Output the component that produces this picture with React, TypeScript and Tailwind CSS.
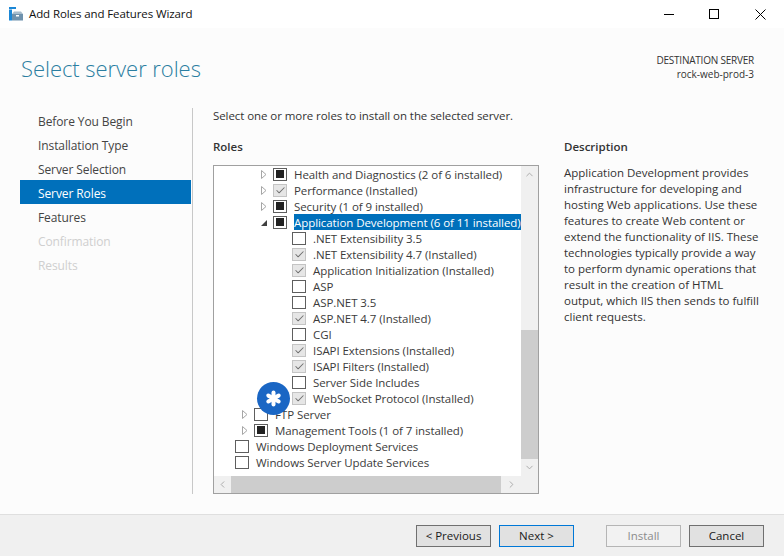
import { Check, ChevronDown, ChevronLeft, ChevronRight, ChevronUp } from "lucide-react";

type Mark = "none" | "check" | "partial";

interface RoleRow {
  label: string;
  depth: number;
  mark: Mark;
  expander?: "closed" | "open";
  selected?: boolean;
}

const steps = [
  { label: "Before You Begin", state: "normal" },
  { label: "Installation Type", state: "normal" },
  { label: "Server Selection", state: "normal" },
  { label: "Server Roles", state: "active" },
  { label: "Features", state: "normal" },
  { label: "Confirmation", state: "disabled" },
  { label: "Results", state: "disabled" },
];

const roles: RoleRow[] = [
  { label: "Health and Diagnostics (2 of 6 installed)", depth: 2, mark: "partial", expander: "closed" },
  { label: "Performance (Installed)", depth: 2, mark: "check", expander: "closed" },
  { label: "Security (1 of 9 installed)", depth: 2, mark: "partial", expander: "closed" },
  { label: "Application Development (6 of 11 installed)", depth: 2, mark: "partial", expander: "open", selected: true },
  { label: ".NET Extensibility 3.5", depth: 3, mark: "none" },
  { label: ".NET Extensibility 4.7 (Installed)", depth: 3, mark: "check" },
  { label: "Application Initialization (Installed)", depth: 3, mark: "check" },
  { label: "ASP", depth: 3, mark: "none" },
  { label: "ASP.NET 3.5", depth: 3, mark: "none" },
  { label: "ASP.NET 4.7 (Installed)", depth: 3, mark: "check" },
  { label: "CGI", depth: 3, mark: "none" },
  { label: "ISAPI Extensions (Installed)", depth: 3, mark: "check" },
  { label: "ISAPI Filters (Installed)", depth: 3, mark: "check" },
  { label: "Server Side Includes", depth: 3, mark: "none" },
  { label: "WebSocket Protocol (Installed)", depth: 3, mark: "check" },
  { label: "FTP Server", depth: 1, mark: "none", expander: "closed" },
  { label: "Management Tools (1 of 7 installed)", depth: 1, mark: "partial", expander: "closed" },
  { label: "Windows Deployment Services", depth: 0, mark: "none" },
  { label: "Windows Server Update Services", depth: 0, mark: "none" },
];

const descriptionLines = [
  "Application Development provides",
  "infrastructure for developing and",
  "hosting Web applications. Use these",
  "features to create Web content or",
  "extend the functionality of IIS. These",
  "technologies typically provide a way",
  "to perform dynamic operations that",
  "result in the creation of HTML",
  "output, which IIS then sends to fulfill",
  "client requests.",
];

function TreeCheckbox({ mark }: { mark: Mark }) {
  if (mark === "check") {
    return (
      <span className="flex h-[13px] w-[14px] shrink-0 items-center justify-center border border-[#c4c4c4] bg-[#e6e6e6]">
        <Check size={11} strokeWidth={2.2} className="text-[#6f6f6f]" />
      </span>
    );
  }
  return (
    <span className="flex h-[13px] w-[14px] shrink-0 items-center justify-center border border-[#5e5e5e] bg-white">
      {mark === "partial" && <span className="h-2 w-2 bg-[#222222]" />}
    </span>
  );
}

function Expander({ kind }: { kind?: "closed" | "open" }) {
  if (!kind) return null;
  return (
    <svg width="6" height="9" viewBox="0 0 6 9" className="shrink-0">
      {kind === "closed" ? (
        <path d="M0.5 0.5 L5 4.5 L0.5 8.5 Z" fill="white" stroke="#a6a6a6" />
      ) : (
        <path d="M0 8 L6 8 L6 2 Z" fill="#404040" />
      )}
    </svg>
  );
}

function Row({ row }: { row: RoleRow }) {
  const indent = ["pl-[21px]", "pl-[28px]", "pl-[47px]", "pl-[78px]"][row.depth];
  return (
    <div className={`flex h-4 items-center ${indent}`}>
      {row.expander && (
        <span className="flex w-3 shrink-0 items-center">
          <Expander kind={row.expander} />
        </span>
      )}
      <TreeCheckbox mark={row.mark} />
      <span
        className={`ml-[7px] h-4 whitespace-nowrap pt-px leading-[15px] tracking-[-0.07px] ${
          row.selected ? "bg-[#0070bb] text-white" : "text-[#3b3b3b]"
        }`}
      >
        {row.label}
      </span>
    </div>
  );
}

function WizardButton({ label, state = "normal" }: { label: string; state?: "normal" | "focus" | "disabled" }) {
  const styles = {
    normal: "border-[#707070] bg-[#e1e1e1] text-[#1a1a1a]",
    focus: "border-[#0078d7] bg-[#e1e1e1] text-[#1a1a1a]",
    disabled: "border-[#b5b5b5] bg-[#f2f2f2] text-[#8c8c8c]",
  }[state];
  return (
    <button className={`h-[22px] w-[75px] border pt-px text-center leading-none ${styles}`}>{label}</button>
  );
}

export default function App() {
  return (
    <div className="flex h-[556px] w-[784px] flex-col overflow-hidden bg-[#fcfcfc] font-['Open_Sans',sans-serif] text-[11.5px] leading-4 text-[#1f1f1f]">
      {/* Title bar */}
      <div className="flex h-[28px] shrink-0 items-center bg-white pl-[9px]">
        <svg width="14" height="14" viewBox="0 0 14 14" className="mr-[6px]">
          <rect x="0" y="0" width="7" height="2" fill="#1b87d6" />
          <rect x="0" y="2.5" width="3" height="11" fill="#1b87d6" />
          <rect x="3" y="7" width="11" height="6.5" fill="#6f92ad" />
          <path d="M3 7 L5 4.5 L12 4.5 L14 7 Z" fill="#a7bccc" />
          <rect x="7" y="8" width="3" height="1.5" fill="#ffffff" />
        </svg>
        <span className="tracking-[-0.1px] text-[#111111]">Add Roles and Features Wizard</span>
        <div className="ml-auto flex h-full items-center">
          <span className="mr-[35px] h-px w-[10px] bg-black" />
          <span className="mr-[36px] h-[10px] w-[10px] border border-black" />
          <svg width="11" height="11" viewBox="0 0 11 11" className="mr-[18px]">
            <path d="M0.5 0.5 L10.5 10.5 M10.5 0.5 L0.5 10.5" stroke="black" strokeWidth="1" />
          </svg>
        </div>
      </div>

      {/* Header */}
      <div className="flex h-[80px] shrink-0 items-start justify-between pl-[21px] pr-[30px]">
        <h1 className="mt-[25px] text-[22px] font-light leading-[30px] tracking-[-0.05px] text-[#2b7ea1]">Select server roles</h1>
        <div className="mt-[25px] text-right text-[10px] leading-[14px] text-[#333333]">
          <div className="tracking-[-0.22px]">DESTINATION SERVER</div>
          <div>rock-web-prod-3</div>
        </div>
      </div>

      {/* Body */}
      <div className="flex h-[386px] shrink-0 pl-5">
        <nav className="flex h-[386px] w-[173px] shrink-0 flex-col border-r border-[#c8c8c8] pr-px text-xs tracking-[-0.1px]">
          {steps.map((step) => (
            <div
              key={step.label}
              className={`flex h-6 w-[171px] items-center pl-[18px] pt-[3px] ${
                step.state === "active"
                  ? "bg-[#0070bb] text-white"
                  : step.state === "disabled"
                    ? "text-[#cfcfcf]"
                    : "text-[#444444]"
              }`}
            >
              {step.label}
            </div>
          ))}
        </nav>

        <div className="flex min-w-0 flex-1 flex-col pl-5">
          <p className="tracking-[-0.07px] text-[#333333]">Select one or more roles to install on the selected server.</p>
          <div className="mt-[15px] flex">
            <div className="w-[326px] shrink-0">
              <div className="font-semibold text-[#333333]">Roles</div>
              <div className="relative mt-[10px] flex h-[329px] w-[326px] flex-col border border-[#a0a0a0] bg-white">
                <div className="flex min-h-0 flex-1">
                  <div className="min-w-0 flex-1 overflow-hidden">
                    {roles.map((row) => (
                      <Row key={row.label} row={row} />
                    ))}
                  </div>
                  {/* Vertical scrollbar */}
                  <div className="flex w-[17px] shrink-0 flex-col bg-[#f0f0f0]">
                    <div className="flex h-[17px] items-center justify-center">
                      <ChevronUp size={11} className="text-[#a6a6a6]" />
                    </div>
                    <div className="mt-[147px] flex-1 bg-[#cdcdcd]" />
                    <div className="flex h-[17px] items-center justify-center">
                      <ChevronDown size={11} className="text-[#a6a6a6]" />
                    </div>
                  </div>
                </div>
                {/* Horizontal scrollbar */}
                <div className="flex h-[17px] shrink-0 bg-[#f0f0f0]">
                  <div className="flex w-[17px] items-center justify-center">
                    <ChevronLeft size={11} className="text-[#a6a6a6]" />
                  </div>
                  <div className="flex-1 bg-[#cdcdcd]" />
                  <div className="flex w-[20px] items-center justify-center">
                    <ChevronRight size={11} className="text-[#a6a6a6]" />
                  </div>
                  <div className="w-[17px]" />
                </div>
                {/* Floating badge */}
                <div className="absolute left-[43px] top-[216px] flex h-[33px] w-[33px] items-center justify-center rounded-full bg-[#1a66c4]">
                  <svg width="17" height="17" viewBox="0 0 17 17">
                    <g stroke="white" strokeWidth="4" strokeLinecap="round">
                      <path d="M8.5 2.5 V14.5" />
                      <path d="M3.3 5.5 L13.7 11.5" />
                      <path d="M13.7 5.5 L3.3 11.5" />
                    </g>
                  </svg>
                </div>
              </div>
            </div>
            <div className="ml-[25px] w-[200px] shrink-0">
              <div className="font-semibold text-[#333333]">Description</div>
              <p className="mt-[10px] text-[#333333]">
                {descriptionLines.map((line) => (
                  <span key={line} className="block whitespace-nowrap">
                    {line}
                  </span>
                ))}
              </p>
            </div>
          </div>
        </div>
      </div>

      {/* Footer */}
      <div className="mt-auto flex h-[42px] shrink-0 items-center border-t border-[#dfdfdf] bg-[#f0f0f0] pl-[416px]">
        <WizardButton label="< Previous" />
        <div className="ml-2">
          <WizardButton label="Next >" state="focus" />
        </div>
        <div className="ml-[32px]">
          <WizardButton label="Install" state="disabled" />
        </div>
        <div className="ml-2">
          <WizardButton label="Cancel" />
        </div>
      </div>
    </div>
  );
}
